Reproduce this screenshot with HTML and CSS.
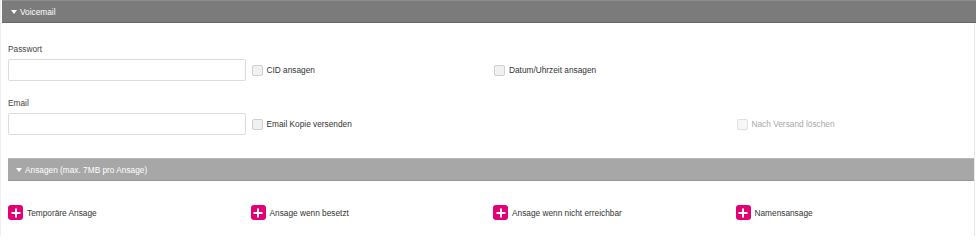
FILE: index.html
```html
<!DOCTYPE html>
<html lang="de">
<head>
<meta charset="utf-8">
<title>Voicemail</title>
<link rel="stylesheet" href="styles.css">
</head>
<body>
<div class="page">
  <div class="section-header section-header--dark">
    <span class="caret"></span><span>Voicemail</span>
  </div>

  <div class="form">
    <div class="form-row">
      <div class="field">
        <label class="field-label">Passwort</label>
        <input class="text-input" type="password">
      </div>
      <div class="check"><span class="box"></span><span>CID ansagen</span></div>
      <div class="check"><span class="box"></span><span>Datum/Uhrzeit ansagen</span></div>
      <div></div>
    </div>

    <div class="form-row form-row--second">
      <div class="field">
        <label class="field-label">Email</label>
        <input class="text-input" type="text">
      </div>
      <div class="check"><span class="box"></span><span>Email Kopie versenden</span></div>
      <div></div>
      <div class="check check--disabled"><span class="box"></span><span>Nach Versand löschen</span></div>
    </div>

    <div class="section-header section-header--light">
      <span class="caret"></span><span>Ansagen (max. 7MB pro Ansage)</span>
    </div>

    <div class="announce-row">
      <div class="announce"><span class="plus"></span><span>Temporäre Ansage</span></div>
      <div class="announce"><span class="plus"></span><span>Ansage wenn besetzt</span></div>
      <div class="announce"><span class="plus"></span><span>Ansage wenn nicht erreichbar</span></div>
      <div class="announce"><span class="plus"></span><span>Namensansage</span></div>
    </div>
  </div>
</div>
</body>
</html>
```

FILE: styles.css
```css
html, body {
  margin: 0;
  padding: 0;
  background: #ffffff;
}

body {
  font-family: "Liberation Sans", Arial, sans-serif;
  font-size: 8.3px;
  color: #3a3a3a;
}

.page {
  width: 975px;
  height: 236px;
  border-right: 1px solid #e8e8e8;
  border-left: 1px solid #f0f0f0;
  box-sizing: border-box;
}

.section-header {
  display: flex;
  align-items: center;
  gap: 3px;
  color: #ffffff;
  box-sizing: border-box;
}

.section-header--dark {
  margin-left: 1px;
  margin-right: -2px;
  height: 23px;
  padding-left: 9px;
  background: #7b7b7b;
  border-top: 1px solid #8e8e8e;
  border-bottom: 1px solid #666666;
}

.section-header--light {
  height: 23px;
  padding-left: 8px;
  margin-top: 23px;
  background: #a7a7a7;
  border-top: 1px solid #b8b8b8;
  border-bottom: 1px solid #979797;
}

.caret {
  width: 0;
  height: 0;
  border-left: 3px solid transparent;
  border-right: 3px solid transparent;
  border-top: 4px solid #ffffff;
}

.form {
  padding-left: 7px;
}

.form-row {
  display: grid;
  grid-template-columns: repeat(4, 242.5px);
  align-items: end;
  padding-top: 21px;
}

.form-row--second {
  padding-top: 17px;
}

.field {
  display: flex;
  flex-direction: column;
  gap: 4px;
}

.field-label {
  line-height: 11px;
  color: #444444;
}

.text-input {
  width: 238px;
  height: 22px;
  box-sizing: border-box;
  margin: 0;
  border: 1px solid #dcdcdc;
  border-radius: 2px;
  background: #ffffff;
  outline: none;
}

.check {
  display: flex;
  align-items: center;
  gap: 4px;
  height: 22px;
  padding-left: 1px;
  color: #333333;
}

.box {
  width: 11px;
  height: 11px;
  box-sizing: border-box;
  border: 1px solid #cfcfcf;
  border-radius: 2px;
  background: #f1f1f1;
}

.check--disabled {
  color: #a8a8a8;
}

.check--disabled .box {
  border-color: #e0e0e0;
  background: #f7f7f7;
}

.announce-row {
  display: grid;
  grid-template-columns: repeat(4, 242.5px);
  padding-top: 24px;
}

.announce {
  display: flex;
  align-items: center;
  gap: 4px;
  color: #333333;
}

.plus {
  position: relative;
  width: 15px;
  height: 15px;
  border-radius: 3px;
  background: #e20074;
  flex: none;
}

.plus::before,
.plus::after {
  content: "";
  position: absolute;
  background: #ffffff;
  left: 50%;
  top: 50%;
  transform: translate(-50%, -50%);
}

.plus::before {
  width: 9px;
  height: 2px;
}

.plus::after {
  width: 2px;
  height: 9px;
}
```
